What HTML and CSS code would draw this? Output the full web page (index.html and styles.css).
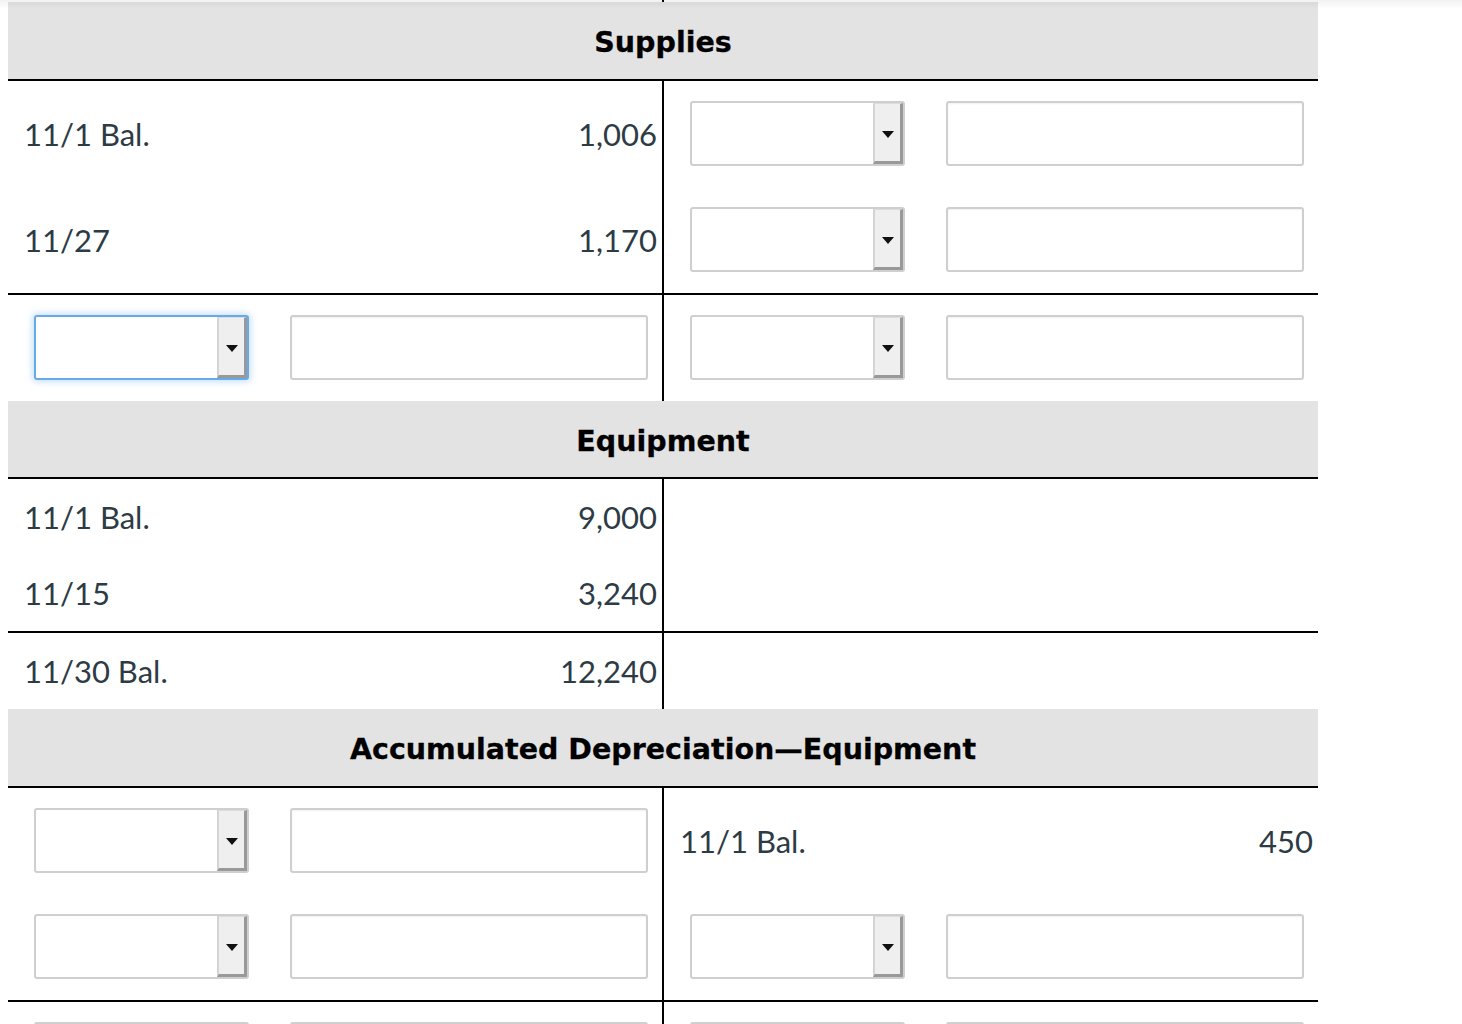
FILE: index.html
```html
<!DOCTYPE html>
<html lang="en">
<head>
<meta charset="utf-8">
<title>T-Accounts</title>
<link rel="stylesheet" href="styles.css">
</head>
<body>
<div class="topshade"></div>
<div class="ledger">
  <div class="row strip"><div class="cell left"></div><div class="cell right"></div></div>

  <div class="head">Supplies</div>
  <div class="row">
    <div class="cell left text"><span>11/1 Bal.</span><span>1,006</span></div>
    <div class="cell right inputs"><div class="sel"><span class="sel-btn"><i class="caret"></i></span></div><input class="box" type="text"></div>
  </div>
  <div class="row">
    <div class="cell left text"><span>11/27</span><span>1,170</span></div>
    <div class="cell right inputs"><div class="sel"><span class="sel-btn"><i class="caret"></i></span></div><input class="box" type="text"></div>
  </div>
  <div class="row total">
    <div class="cell left inputs"><div class="sel focus"><span class="sel-btn"><i class="caret"></i></span></div><input class="box" type="text"></div>
    <div class="cell right inputs"><div class="sel"><span class="sel-btn"><i class="caret"></i></span></div><input class="box" type="text"></div>
  </div>

  <div class="head compact">Equipment</div>
  <div class="row">
    <div class="cell left text short"><span>11/1 Bal.</span><span>9,000</span></div>
    <div class="cell right"></div>
  </div>
  <div class="row">
    <div class="cell left text short"><span>11/15</span><span>3,240</span></div>
    <div class="cell right"></div>
  </div>
  <div class="row total">
    <div class="cell left text short"><span>11/30 Bal.</span><span>12,240</span></div>
    <div class="cell right"></div>
  </div>

  <div class="head">Accumulated Depreciation—Equipment</div>
  <div class="row">
    <div class="cell left inputs"><div class="sel"><span class="sel-btn"><i class="caret"></i></span></div><input class="box" type="text"></div>
    <div class="cell right text"><span>11/1 Bal.</span><span>450</span></div>
  </div>
  <div class="row">
    <div class="cell left inputs"><div class="sel"><span class="sel-btn"><i class="caret"></i></span></div><input class="box" type="text"></div>
    <div class="cell right inputs"><div class="sel"><span class="sel-btn"><i class="caret"></i></span></div><input class="box" type="text"></div>
  </div>
  <div class="row total">
    <div class="cell left inputs"><div class="sel"><span class="sel-btn"><i class="caret"></i></span></div><input class="box" type="text"></div>
    <div class="cell right inputs"><div class="sel"><span class="sel-btn"><i class="caret"></i></span></div><input class="box" type="text"></div>
  </div>
</div>
</body>
</html>
```

FILE: styles.css
```css
html, body {
  margin: 0;
  padding: 0;
  background: #ffffff;
}
body {
  padding: 0 8px;
  font-family: Lato, "Open Sans", sans-serif;
  color: #2d3b45;
}
.topshade {
  position: fixed;
  left: 0;
  top: 0;
  width: 100%;
  height: 9px;
  background: linear-gradient(rgba(0,0,0,0.055), rgba(0,0,0,0));
  pointer-events: none;
  z-index: 5;
}
.ledger {
  width: 1310px;
}
.row {
  display: grid;
  grid-template-columns: 656px 654px;
}
.row.strip .cell {
  height: 2px;
}
.row.total {
  border-top: 2px solid #000;
}
.cell {
  box-sizing: border-box;
}
.cell.left {
  border-right: 2px solid #000;
}
.head {
  box-sizing: border-box;
  background: #e3e3e3;
  border-bottom: 2px solid #000;
  height: 79px;
  display: flex;
  align-items: center;
  justify-content: center;
  font-family: "DejaVu Sans", Verdana, sans-serif;
  font-weight: bold;
  font-size: 28.5px;
  color: #000;
  padding-top: 4px;
  -webkit-text-stroke: 0.3px #000;
}
.head.compact {
  height: 78px;
}
.cell.text {
  display: flex;
  align-items: center;
  justify-content: space-between;
  padding: 0 5px 0 16px;
  font-size: 31px;
  line-height: 36px;
}
.cell.text.short {
  height: 76px;
}
.cell.inputs {
  display: flex;
  align-items: flex-start;
  gap: 41px;
  padding: 20px 14px 21px 26px;
}
.sel {
  box-sizing: border-box;
  width: 215px;
  height: 65px;
  border: 2px solid #cfcfcf;
  border-radius: 3px;
  background: #fff;
  display: flex;
  justify-content: flex-end;
  flex: none;
}
.sel.focus {
  border-color: #66aaea;
  box-shadow: 0 0 6px 2px rgba(102, 170, 234, 0.35);
}
.sel-btn {
  box-sizing: border-box;
  width: 30px;
  height: 100%;
  background: #efefef;
  border-left: 2px solid #d4d4d4;
  border-top: 1px solid #dcdcdc;
  border-right: 3px solid #999;
  border-bottom: 3px solid #999;
  display: flex;
  align-items: center;
  justify-content: center;
}
.caret {
  width: 0;
  height: 0;
  border-left: 6px solid transparent;
  border-right: 6px solid transparent;
  border-top: 7px solid #111;
  margin-top: 3px;
}
.box {
  box-sizing: border-box;
  width: 358px;
  height: 65px;
  border: 2px solid #cfcfcf;
  border-radius: 3px;
  background: #fff;
  box-shadow: inset 0 1px 2px rgba(0,0,0,0.06);
  margin: 0;
  padding: 0 10px;
  font: inherit;
  outline: none;
  flex: none;
}
```
